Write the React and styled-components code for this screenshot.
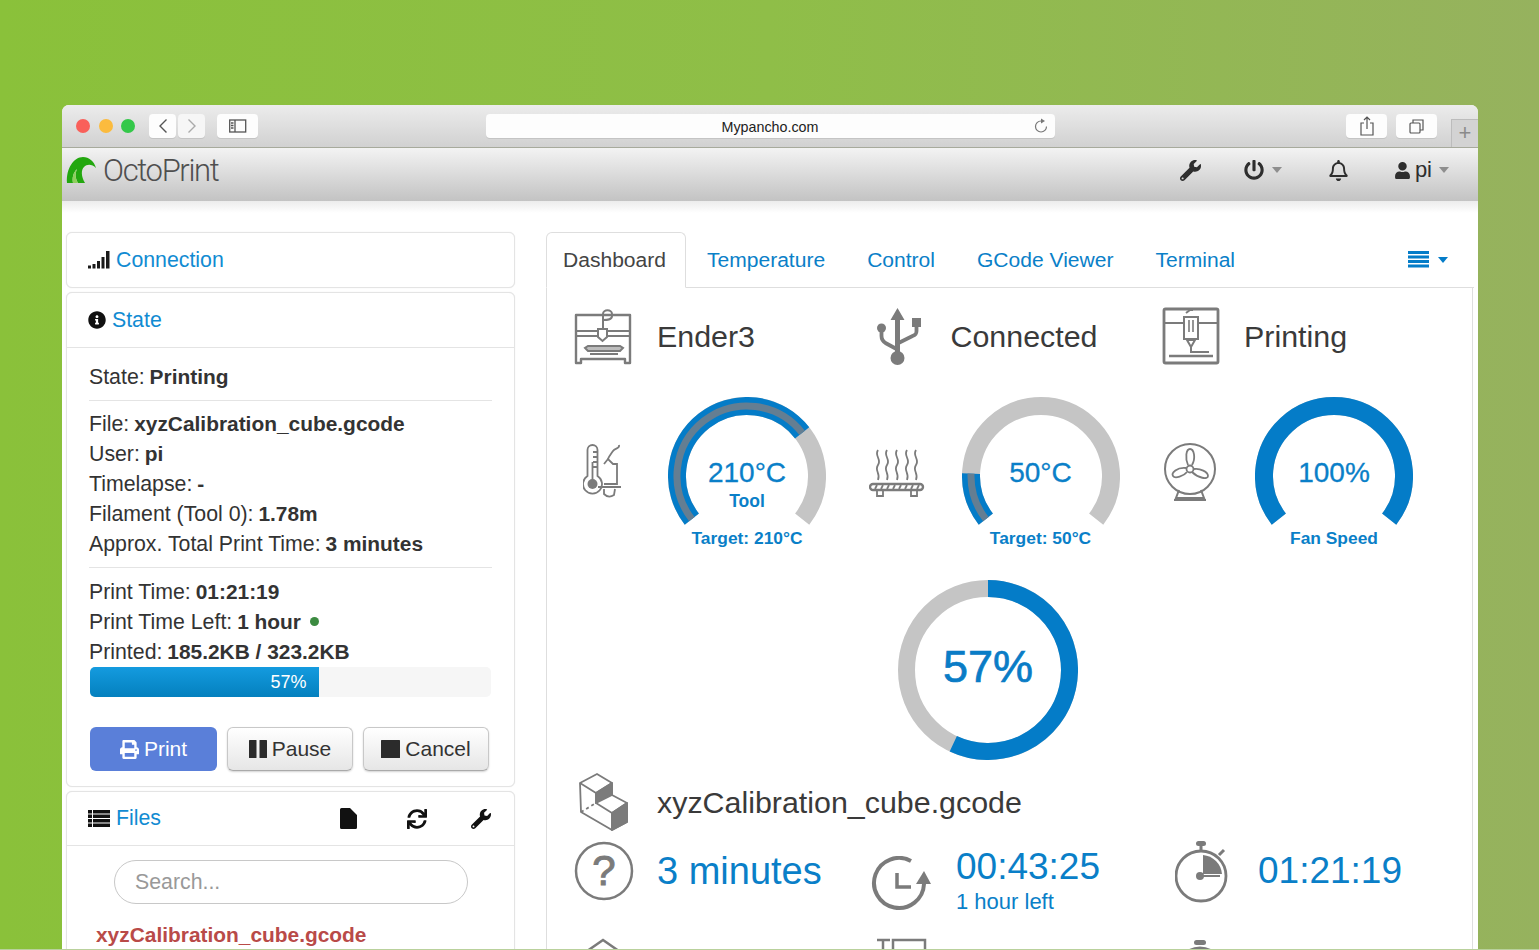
import React from "react";
import styled, { createGlobalStyle } from "styled-components";
import { FaWrench, FaPowerOff, FaRegBell, FaUser, FaInfoCircle, FaSync, FaPrint } from "react-icons/fa";

const Global = createGlobalStyle`
  html, body { margin: 0; padding: 0; background: #8ec03f; }
  * { box-sizing: border-box; }
  body { font-family: "Liberation Sans", Arial, sans-serif; color: #333; overflow: hidden; }
`;

const Page = styled.div`
  width: 1539px; height: 950px; overflow: hidden;
  padding: 105px 61px 0 62px;
  background: linear-gradient(90deg, #8ac13a 0%, #8fbe48 50%, #96b25e 100%);
  border-bottom: 1px solid #b9d19c;
`;
const Browser = styled.div`
  width: 1416px; height: 844px; overflow: hidden; background: #fff;
  border-radius: 7px 7px 0 0;
  display: flex; flex-direction: column;
`;
const TitleBar = styled.div`
  height: 43px; flex: none; display: flex; align-items: center;
  padding: 0 0 0 14px;
  background: linear-gradient(#ececec, #d1d1d1);
  border-bottom: 1px solid #a7aa9c;
`;
const Lights = styled.div` display: flex; gap: 8.5px; `;
const Light = styled.span`
  width: 14px; height: 14px; border-radius: 50%; background: ${p => p.$c};
`;
const ChromeButton = styled.div`
  height: 24px; width: ${p => p.$w}px; margin-left: ${p => p.$ml}px; flex: none;
  background: ${p => p.$dim ? "#f6f6f6" : "#fdfdfd"}; border-radius: 4px;
  box-shadow: 0 1px 0 #c4c4c4;
  display: flex; align-items: center; justify-content: center;
`;
const UrlBar = styled.div`
  width: 569px; height: 24px; margin-left: 228px; flex: none; position: relative;
  background: #fdfdfd; border-radius: 4px; box-shadow: 0 1px 0 #c4c4c4;
  font-size: 14.3px; line-height: 26px; text-align: center; color: #222;
  padding-right: 1px;
`;
const Reload = styled.svg` position: absolute; right: 6px; top: 4px; `;
const PlusTab = styled.div`
  width: 27px; height: 28px; margin-left: 14px; align-self: flex-end; flex: none;
  background: #d3d3d3; border: 1px solid #bcbcbc; border-right: 0; border-bottom: 0;
  color: #8a8a8a; font-size: 22px; line-height: 26px; text-align: center; font-weight: 300;
`;

const NavBar = styled.div`
  height: 53px; flex: none; display: flex; align-items: center;
  padding: 0 29px 9px 4px;
  background: linear-gradient(#f3f3f3, #c3c3c3);
`;
const Brand = styled.div`
  display: flex; align-items: center; gap: 6px;
  font-family: Roboto, "Liberation Sans", sans-serif; font-weight: 300;
  font-size: 31px; letter-spacing: -1.35px; color: #4f4f4f;
`;
const NavRight = styled.div`
  margin-left: auto; display: flex; align-items: center; gap: 45px; color: #2e2e2e;
`;
const NavItem = styled.div`
  display: flex; align-items: center; gap: ${p => p.$gap || 8}px; font-size: 22px;
  margin: 0 ${p => p.$mr || 0}px 0 ${p => p.$ml || 0}px;
`;
const NavLabel = styled.span` margin-right: 3px; line-height: 24px; `;
const Caret = styled.span`
  width: 0; height: 0; border-left: 5.5px solid transparent; border-right: 5.5px solid transparent;
  border-top: 6px solid ${p => p.$c || "#8e8e8e"};
`;

const Content = styled.div`
  flex: 1; display: flex; align-items: flex-start; gap: 31px;
  padding: 31px 4px 0 4px; min-height: 0;
  background: linear-gradient(#ececec 0, #fff 12px);
`;
const Sidebar = styled.div`
  width: 449px; flex: none; display: flex; flex-direction: column; gap: 4px;
`;
const Panel = styled.section`
  border: 1px solid #e4e4e4; border-radius: 6px; box-shadow: 0 0 1px #dcdcdc;
  background: #fff;
`;
const PanelHead = styled.div`
  height: ${p => p.$h}px; display: flex; align-items: center; gap: ${p => p.$gap || 6}px;
  padding: 0 21px; font-size: 21.3px; color: #118bd2;
  border-bottom: ${p => p.$line ? "1px solid #e4e4e4" : "0"};
  svg { color: #111; flex: none; }
`;
const HeadTools = styled.div`
  margin-left: auto; display: flex; align-items: center; gap: 44px; padding-right: 2px; color: #111;
`;
const PanelBody = styled.div`
  padding: 14px 22px 15px;
  font-size: 21.3px; line-height: 30px; color: #333;
  b { font-weight: 700; font-size: 20.9px; margin-left: -1px; }
`;
const Rule = styled.hr`
  border: 0; border-top: 1px solid #e4e4e4; margin: 8px 0 ${p => p.$after}px;
`;
const Dot = styled.span`
  display: inline-block; width: 9px; height: 9px; border-radius: 50%; background: #3c8b41;
  margin-left: 3px; vertical-align: 3px;
`;
const Progress = styled.div`
  height: 30px; background: #f6f6f6; border-radius: 5px; overflow: hidden; width: 401px; margin-left: 1px;
`;
const ProgressFill = styled.div`
  height: 100%; background: linear-gradient(#149bdf, #0480be);
  color: #fff; font-size: 18px; line-height: 30px; text-align: right; padding-right: 12px;
`;
const Buttons = styled.div` display: flex; gap: 10px; margin: 30px 0 0 1px; `;
const Button = styled.div`
  width: ${p => p.$w}px; height: 44px; border-radius: 6px; display: flex; align-items: center; justify-content: center; gap: 5px;
  font-size: 21px;
  ${p => p.$primary
    ? "background:#5a7fd9;color:#fff;"
    : "background:linear-gradient(#fff,#e6e6e6);color:#333;border:1px solid #c8c8c8;border-bottom-color:#aaa;box-shadow:0 1px 2px rgba(0,0,0,.18);"}
`;
const FilesBody = styled.div` padding: 14px 47px 0; height: 200px; `;
const Search = styled.input`
  width: 354px; height: 44px; margin-left: 0; border: 1px solid #c8c8c8; border-radius: 22px;
  padding: 0 20px; font: 21.3px "Liberation Sans", sans-serif; color: #555; display: block; outline: 0;
  &::placeholder { color: #999; opacity: 1; }
`;
const FileName = styled.div`
  margin: 18px 0 0 -18px; font-size: 20.9px; font-weight: 700; color: #b94a48; line-height: 26px;
`;

const Main = styled.div` width: 928px; flex: none; `;
const Tabs = styled.div`
  display: flex; height: 56px; align-items: stretch; border-bottom: 1px solid #dedede;
`;
const Tab = styled.div`
  display: flex; align-items: center; font-size: 21.05px;
  ${p => p.$active
    ? "color:#444;background:#fff;border:1px solid #dedede;border-bottom:1px solid #fff;border-radius:6px 6px 0 0;padding:0 19px 0 16px;height:56px;"
    : "color:#0a80c8;padding:0 21px;"}
`;
const TabMenu = styled.div`
  margin-left: auto; display: flex; align-items: center; gap: 8px; padding-right: 26px;
`;
const TabPane = styled.div`
  border: 1px solid #dedede; border-top: 0; width: 927px; padding: 18px 0 0 27px; height: 700px;
`;
const Cols = styled.div`
  display: grid; grid-template-columns: repeat(3, 293.5px); margin-top: ${p => p.$mt || 0}px; height: ${p => p.$h}px;
`;
const Cell = styled.div`
  display: flex; align-items: ${p => p.$align || "center"};
`;
const IconSlot = styled.div`
  width: ${p => p.$w || 83}px; flex: none; padding-left: ${p => p.$pl || 0}px; padding-top: ${p => p.$pt || 0}px;
  display: flex; align-items: center;
`;
const Title = styled.div` font-size: 30.4px; color: #3a3a3a; `;
const Gauge = styled.div`
  position: relative; width: 158px; height: 151px; margin-left: 36px; flex: none;
  svg { display: block; }
`;
const GaugeSlot = styled.div`
  width: 58px; flex: none; display: flex; justify-content: center;
`;
const GaugeText = styled.div`
  position: absolute; left: 0; right: 0; top: 58px; text-align: center; color: #0a7fc8;
`;
const GaugeValue = styled.div` font-size: 28px; line-height: 36px; -webkit-text-stroke: .3px #0a7fc8; `;
const GaugeLabel = styled.div` font-size: 17.5px; font-weight: 700; line-height: 24px; margin-top: -2px; `;
const GaugeFoot = styled.div`
  position: absolute; left: -20px; right: -20px; top: 129px; text-align: center; color: #0a7fc8;
  font-size: 17.4px; font-weight: 700; line-height: 24px;
`;
const Ring = styled.div`
  position: relative; width: 180px; height: 180px; margin: 32px 0 0 324px;
`;
const RingValue = styled.div`
  position: absolute; inset: 0; display: flex; align-items: center; justify-content: center;
  font-size: 45px; color: #0a7cc6; padding-bottom: 6px; -webkit-text-stroke: .7px #0a7cc6;
`;
const FileRow = styled.div`
  display: flex; align-items: center; height: 59px; margin-top: 13px;
`;
const BigValue = styled.div` font-size: ${p => p.$size}px; line-height: 60px; color: #0a7fc8; `;
const TimeStack = styled.div` padding-top: 4px; color: #0a7fc8; `;
const TimeValue = styled.div` font-size: 37px; line-height: 44px; `;
const TimeSub = styled.div` font-size: 22px; line-height: 26px; `;

const polar = (c, r, a) => {
  const t = (a - 90) * Math.PI / 180;
  return [c + r * Math.cos(t), c + r * Math.sin(t)];
};
const arc = (c, r, a0, a1) => {
  const [x0, y0] = polar(c, r, a0);
  const [x1, y1] = polar(c, r, a1);
  return `M${x0} ${y0}A${r} ${r} 0 ${a1 - a0 > 180 ? 1 : 0} 1 ${x1} ${y1}`;
};

const GaugeArc = ({ target, actual }) => (
  <svg width="158" height="151" viewBox="0 0 158 151" fill="none">
    <path d={arc(79, 70, -128, 128)} stroke="#c5c5c5" strokeWidth="18" />
    {target > 0 && <path d={arc(79, 70, -128, -128 + 256 * target)} stroke="#047cc8" strokeWidth="18" />}
    {actual > 0 && <path d={arc(79, 70, -128, -128 + 256 * actual)} stroke="#647e92" strokeWidth="7" />}
  </svg>
);

const G = "#7b7b7b";

const PrinterIcon = () => (
  <svg width="58" height="60" viewBox="0 0 58 60" fill="none" stroke={G} strokeWidth="2">
    <path d="M2 9h54v48h-5v-4H7v4H2z" strokeWidth="2.4" strokeLinejoin="round" />
    <path d="M2 25h21M33 25h23M2 30h21M33 30h23" />
    <path d="M29 23V8c0-5 9-5 9 0v2c0 4-5 4-9 4" />
    <path d="M24 23h9v8l-4.500 4-4.500-4z" />
    <path d="M14 40h32l3 2-3 3H14l-3-3z" fill={G} fillOpacity=".5" />
    <path d="M16 48h28" />
  </svg>
);
const UsbIcon = () => (
  <svg width="58" height="60" viewBox="0 0 58 60" fill={G}>
    <path d="M29.500 2l-7 12h4.500v38h5V14h4.500z" />
    <circle cx="29.500" cy="52" r="7" />
    <circle cx="13.500" cy="22" r="4.500" />
    <rect x="44" y="12" width="9" height="9" />
    <path d="M13.500 25v5c0 3 1 5 4 7l11 6" fill="none" stroke={G} strokeWidth="3.800" />
    <path d="M48.500 20v5c0 3-1 4-4 5l-14 7" fill="none" stroke={G} strokeWidth="3.800" />
  </svg>
);
const PrintingIcon = () => (
  <svg width="58" height="60" viewBox="0 0 58 60" fill="none" stroke={G} strokeWidth="2">
    <rect x="2" y="3" width="54" height="54" rx="1.500" strokeWidth="2.800" />
    <path d="M2 17h20M36 17h20" />
    <path d="M24 7l4-3h3M22 11h14v22H22z" />
    <path d="M27 14v12M31 14v12" strokeWidth="1.600" />
    <path d="M25 34h8l-4 7z M29 41v5h18" />
    <path d="M7 50h44" strokeWidth="2.400" />
  </svg>
);
const HotendIcon = () => (
  <svg width="40" height="58" viewBox="0 0 40 58" fill="none" stroke={G} strokeWidth="1.800">
    <path d="M4.500 32V6a5 5 0 0 1 10 0v26a9.500 9.500 0 1 1-10 0z" />
    <circle cx="9.500" cy="40" r="5" fill={G} stroke="none" />
    <path d="M9.500 37V18M14 8h-4M14 13h-4M14 18h-4M14 23h-4" />
    <path d="M36 1c1 4-4 3-6 6s-4 5-5 8" />
    <path d="M21 20l4-5 5 5h4v20H21" />
    <path d="M15 43h23M21 45v5c3 3 7 3 10 1l1-6" />
  </svg>
);
const BedIcon = () => (
  <svg width="56" height="50" viewBox="0 0 56 50" fill="none" stroke={G} strokeWidth="1.800">
    <path d="M7 1c-4 6 4 9 0 15s3 8 0 15M16 1c-4 6 4 9 0 15s3 8 0 15M26 1c-4 6 4 9 0 15s3 8 0 15M36 1c-4 6 4 9 0 15s3 8 0 15M45 1c-4 6 4 9 0 15s3 8 0 15" transform="translate(2 1)" />
    <rect x="1" y="36" width="53" height="6" rx="3" strokeWidth="2.400" />
    <path d="M8 37l-2 4M14 37l-2 4M20 37l-2 4M26 37l-2 4M32 37l-2 4M38 37l-2 4M44 37l-2 4M50 37l-2 4" />
    <path d="M8 43v5h6v-5M42 43v5h6v-5" />
  </svg>
);
const FanIcon = () => (
  <svg width="54" height="60" viewBox="0 0 54 60" fill="none" stroke={G} strokeWidth="1.800">
    <circle cx="27" cy="26" r="25" strokeWidth="2" />
    <circle cx="27" cy="26" r="3.500" />
    <path d="M25 22c-3-7-2-16 2-16s6 9 2 16" />
    <path d="M31 26c6-1 14 3 14 7s-10 2-16-4" />
    <path d="M24 29c-3 4-12 7-14 4s4-9 13-8" />
    <path d="M16 47l-3 8h28l-3-8M11 57h32" strokeWidth="2" />
  </svg>
);
const CubeIcon = () => (
  <svg width="52" height="60" viewBox="0 0 52 60" fill="none" stroke={G} strokeWidth="1.800" strokeLinejoin="round">
    <path d="M20 1L3 10l1 29 31 18 15-8V30L35 22V10z" />
    <path d="M3 10l16 10 16-10M19 20v10l16 10 15-10M35 40v17" />
    <path d="M19 20l16-10v12l-16 8z" fill={G} />
    <path d="M35 40l15-10v19l-15 8z" fill={G} />
    <path d="M4 39l15-9" strokeDasharray="3 3" />
  </svg>
);
const QuestionIcon = () => (
  <svg width="60" height="60" viewBox="0 0 60 60" fill="none">
    <circle cx="30" cy="30" r="28" stroke={G} strokeWidth="2.500" />
    <text x="30" y="44" textAnchor="middle" fontFamily="Liberation Sans" fontSize="42" fill={G} stroke={G} strokeWidth="1">?</text>
  </svg>
);
const ClockBackIcon = () => (
  <svg width="62" height="56" viewBox="0 0 62 56" fill="none" stroke={G} strokeWidth="4">
    <path d="M41 5A25 25 0 1 0 54 28" />
    <path d="M27 17v14h14" strokeWidth="3.500" />
    <path d="M46 28l8-13 7 13z" fill={G} stroke="none" />
  </svg>
);
const StopwatchIcon = () => (
  <svg width="56" height="62" viewBox="0 0 56 62" fill="none" stroke={G}>
    <circle cx="26" cy="35" r="25" strokeWidth="2.800" />
    <rect x="21" y="0" width="10" height="5" rx="2.500" fill={G} stroke="none" />
    <path d="M26 5v5M44 14l5-5" strokeWidth="3" />
    <path d="M28 14A21 21 0 0 1 47 33H28z" fill={G} stroke="none" />
    <circle cx="25" cy="35" r="4" fill={G} stroke="none" />
    <path d="M26 35h19" strokeWidth="2" />
  </svg>
);
const HouseIcon = () => (
  <svg width="50" height="40" viewBox="0 0 50 40" fill="none" stroke={G} strokeWidth="2.500">
    <path d="M2 18L25 2l23 16v20H2z" />
  </svg>
);
const LayersIcon = () => (
  <svg width="52" height="40" viewBox="0 0 52 40" fill="none" stroke={G} strokeWidth="2.500">
    <rect x="18" y="2" width="32" height="30" />
    <path d="M2 2h13M8 2v30M2 32h13" />
  </svg>
);
const SmallWatchIcon = () => (
  <svg width="50" height="40" viewBox="0 0 50 40" fill="none" stroke={G}>
    <rect x="16" y="2" width="12" height="5" rx="2.500" fill={G} stroke="none" />
    <circle cx="22" cy="32" r="22" strokeWidth="3" />
  </svg>
);
const SignalIcon = () => (
  <svg width="22" height="18" viewBox="0 0 22 18" fill="#1a1a1a">
    <rect x="0" y="14.500" width="3" height="3" />
    <rect x="4.500" y="13" width="3" height="4.500" />
    <rect x="9" y="10" width="3" height="7.500" />
    <rect x="13.500" y="6" width="3" height="11.500" />
    <rect x="18" y="0" width="3.500" height="17.500" />
  </svg>
);
const ListIcon = () => (
  <svg width="22" height="17" viewBox="0 0 22 17" fill="#111">
    <rect y="0" width="4" height="3.500" /><rect x="5" y="0" width="17" height="3.500" />
    <rect y="4.500" width="4" height="3.500" /><rect x="5" y="4.500" width="17" height="3.500" />
    <rect y="9" width="4" height="3.500" /><rect x="5" y="9" width="17" height="3.500" />
    <rect y="13.500" width="4" height="3.500" /><rect x="5" y="13.500" width="17" height="3.500" />
  </svg>
);
const MenuIcon = () => (
  <svg width="22" height="17" viewBox="0 0 22 17" fill="#047cc8">
    <rect y="0" width="21" height="3" /><rect y="4.500" width="21" height="3" />
    <rect y="9" width="21" height="3" /><rect y="13.500" width="21" height="3" />
  </svg>
);
const FileIcon = () => (
  <svg width="17" height="21" viewBox="0 0 17 21" fill="#111">
    <path d="M0 1.500A1.500 1.500 0 0 1 1.500 0H10l7 7v12.500a1.500 1.500 0 0 1-1.500 1.500h-14A1.500 1.500 0 0 1 0 19.500z" />
  </svg>
);
const PauseIcon = () => (
  <svg width="18" height="18" viewBox="0 0 18 18" fill="#2b2b2b">
    <rect width="7.500" height="18" rx=".5" /><rect x="10.500" width="7.500" height="18" rx=".5" />
  </svg>
);
const StopIcon = () => (
  <svg width="19" height="18" viewBox="0 0 19 18" fill="#2b2b2b"><rect width="19" height="18" rx=".5" /></svg>
);
const Logo = () => (
  <svg width="31" height="28" viewBox="0 0 31 28">
    <path d="M1 27C0 12 8 1 17 1c6 0 11 4 13 11-4-4-9-4-12-1-3 3-3 9 1 16h-7C9 21 9 18 11 13c-4 4-5 9-4 14z" fill="#23a70f" />
    <path d="M7 27c-1-5 0-10 4-14-2 5-2 8 1 14z" fill="#8ed05c" />
  </svg>
);
const Chevron = ({ dir, c }) => (
  <svg width="10" height="16" viewBox="0 0 10 16" fill="none" stroke={c} strokeWidth="1.400">
    <path d={dir === "l" ? "M8.500 1.500L2 8l6.500 6.500" : "M1.500 1.500L8 8l-6.500 6.500"} />
  </svg>
);
const SidebarGlyph = () => (
  <svg width="18" height="14" viewBox="0 0 18 14" fill="none" stroke="#555" strokeWidth="1.300">
    <rect x=".7" y="1" width="16" height="12" /><path d="M6 1v12M2 4h2.500M2 6.500h2.500M2 9h2.500" />
  </svg>
);
const ShareGlyph = () => (
  <svg width="14" height="20" viewBox="0 0 14 20" fill="none" stroke="#555" strokeWidth="1.200">
    <path d="M4 7H1v12h12V7h-3M7 13V1M4 4l3-3 3 3" />
  </svg>
);
const TabsGlyph = () => (
  <svg width="15" height="15" viewBox="0 0 15 15" fill="none" stroke="#555" strokeWidth="1.200">
    <rect x="1" y="4" width="10" height="10" rx="1" /><path d="M4 4V1h10v10h-3" />
  </svg>
);

export default function App() {
  return (
    <Page>
      <Global />
      <Browser>
        <TitleBar>
          <Lights>
            <Light $c="#f9605a" /><Light $c="#fbbb3e" /><Light $c="#34c84a" />
          </Lights>
          <ChromeButton $w={27} $ml={14}><Chevron dir="l" c="#555" /></ChromeButton>
          <ChromeButton $w={27} $ml={2} $dim><Chevron dir="r" c="#aaa" /></ChromeButton>
          <ChromeButton $w={41} $ml={12}><SidebarGlyph /></ChromeButton>
          <UrlBar>
            Mypancho.com
            <Reload width="16" height="16" viewBox="0 0 16 16" fill="none" stroke="#777" strokeWidth="1.200">
              <path d="M8 3a5.500 5.500 0 1 0 5.500 5.500" />
              <path d="M8 .5l4 2.500-4 2.500z" fill="#777" stroke="none" />
            </Reload>
          </UrlBar>
          <ChromeButton $w={41} $ml={291}><ShareGlyph /></ChromeButton>
          <ChromeButton $w={41} $ml={9}><TabsGlyph /></ChromeButton>
          <PlusTab>+</PlusTab>
        </TitleBar>
        <NavBar>
          <Brand><Logo />OctoPrint</Brand>
          <NavRight>
            <NavItem $mr={-2}><FaWrench size={21} /></NavItem>
            <NavItem $mr={1}><FaPowerOff size={20} /><Caret /></NavItem>
            <NavItem><FaRegBell size={21} /></NavItem>
            <NavItem $gap={4}><FaUser size={17} /><NavLabel>pi</NavLabel><Caret /></NavItem>
          </NavRight>
        </NavBar>
        <Content>
          <Sidebar>
            <Panel>
              <PanelHead $h={54}><SignalIcon />Connection</PanelHead>
            </Panel>
            <Panel>
              <PanelHead $h={55} $line $gap={6}><FaInfoCircle size={18} />State</PanelHead>
              <PanelBody>
                <div>State: <b>Printing</b></div>
                <Rule $after={8} />
                <div>File: <b>xyzCalibration_cube.gcode</b></div>
                <div>User: <b>pi</b></div>
                <div>Timelapse: <b>-</b></div>
                <div>Filament (Tool 0): <b>1.78m</b></div>
                <div>Approx. Total Print Time: <b>3 minutes</b></div>
                <Rule $after={9} />
                <div>Print Time: <b>01:21:19</b></div>
                <div>Print Time Left: <b>1 hour</b> <Dot /></div>
                <div>Printed: <b>185.2KB / 323.2KB</b></div>
                <Progress><ProgressFill style={{ width: "57%" }}>57%</ProgressFill></Progress>
                <Buttons>
                  <Button $primary $w={127}><FaPrint size={19} />Print</Button>
                  <Button $w={126}><PauseIcon />Pause</Button>
                  <Button $w={126}><StopIcon />Cancel</Button>
                </Buttons>
              </PanelBody>
            </Panel>
            <Panel>
              <PanelHead $h={54} $line>
                <ListIcon />Files
                <HeadTools>
                  <FileIcon />
                  <FaSync size={20} style={{ marginLeft: 6 }} />
                  <FaWrench size={20} />
                </HeadTools>
              </PanelHead>
              <FilesBody>
                <Search placeholder="Search..." readOnly />
                <FileName>xyzCalibration_cube.gcode</FileName>
              </FilesBody>
            </Panel>
          </Sidebar>
          <Main>
            <Tabs>
              <Tab $active>Dashboard</Tab>
              <Tab>Temperature</Tab>
              <Tab>Control</Tab>
              <Tab>GCode Viewer</Tab>
              <Tab>Terminal</Tab>
              <TabMenu><MenuIcon /><Caret $c="#047cc8" /></TabMenu>
            </Tabs>
            <TabPane>
              <Cols $h={60}>
                <Cell><IconSlot><PrinterIcon /></IconSlot><Title>Ender3</Title></Cell>
                <Cell><IconSlot><UsbIcon /></IconSlot><Title>Connected</Title></Cell>
                <Cell><IconSlot $pl={1}><PrintingIcon /></IconSlot><Title>Printing</Title></Cell>
              </Cols>
              <Cols $h={151} $mt={31}>
                <Cell>
                  <GaugeSlot><HotendIcon /></GaugeSlot>
                  <Gauge>
                    <GaugeArc target={0.703} actual={0.703} />
                    <GaugeText><GaugeValue>210°C</GaugeValue><GaugeLabel>Tool</GaugeLabel></GaugeText>
                    <GaugeFoot>Target: 210°C</GaugeFoot>
                  </Gauge>
                </Cell>
                <Cell>
                  <GaugeSlot><BedIcon /></GaugeSlot>
                  <Gauge>
                    <GaugeArc target={0.156} actual={0.156} />
                    <GaugeText><GaugeValue>50°C</GaugeValue></GaugeText>
                    <GaugeFoot>Target: 50°C</GaugeFoot>
                  </Gauge>
                </Cell>
                <Cell>
                  <GaugeSlot><FanIcon /></GaugeSlot>
                  <Gauge>
                    <GaugeArc target={1} actual={0} />
                    <GaugeText><GaugeValue>100%</GaugeValue></GaugeText>
                    <GaugeFoot>Fan Speed</GaugeFoot>
                  </Gauge>
                </Cell>
              </Cols>
              <Ring>
                <svg width="180" height="180" viewBox="0 0 180 180" fill="none">
                  <circle cx="90" cy="90" r="81.500" stroke="#c5c5c5" strokeWidth="17" />
                  <path d={arc(90, 81.5, 0, 205.2)} stroke="#047cc8" strokeWidth="17" />
                </svg>
                <RingValue>57%</RingValue>
              </Ring>
              <FileRow>
                <IconSlot $pl={3}><CubeIcon /></IconSlot>
                <Title>xyzCalibration_cube.gcode</Title>
              </FileRow>
              <Cols $h={71} $mt={9}>
                <Cell $align="flex-start"><IconSlot><QuestionIcon /></IconSlot><BigValue $size={38}>3 minutes</BigValue></Cell>
                <Cell $align="flex-start">
                  <IconSlot $w={88.5} $pl={2} $pt={15}><ClockBackIcon /></IconSlot>
                  <TimeStack><TimeValue>00:43:25</TimeValue><TimeSub>1 hour left</TimeSub></TimeStack>
                </Cell>
                <Cell $align="flex-start"><IconSlot $w={97} $pl={14}><StopwatchIcon /></IconSlot><BigValue $size={37}>01:21:19</BigValue></Cell>
              </Cols>
              <Cols $h={40} $mt={26}>
                <Cell $align="flex-start"><IconSlot $pl={4}><HouseIcon /></IconSlot></Cell>
                <Cell $align="flex-start"><IconSlot $pl={7}><LayersIcon /></IconSlot></Cell>
                <Cell $align="flex-start"><IconSlot $pl={17}><SmallWatchIcon /></IconSlot></Cell>
              </Cols>
            </TabPane>
          </Main>
        </Content>
      </Browser>
    </Page>
  );
}
